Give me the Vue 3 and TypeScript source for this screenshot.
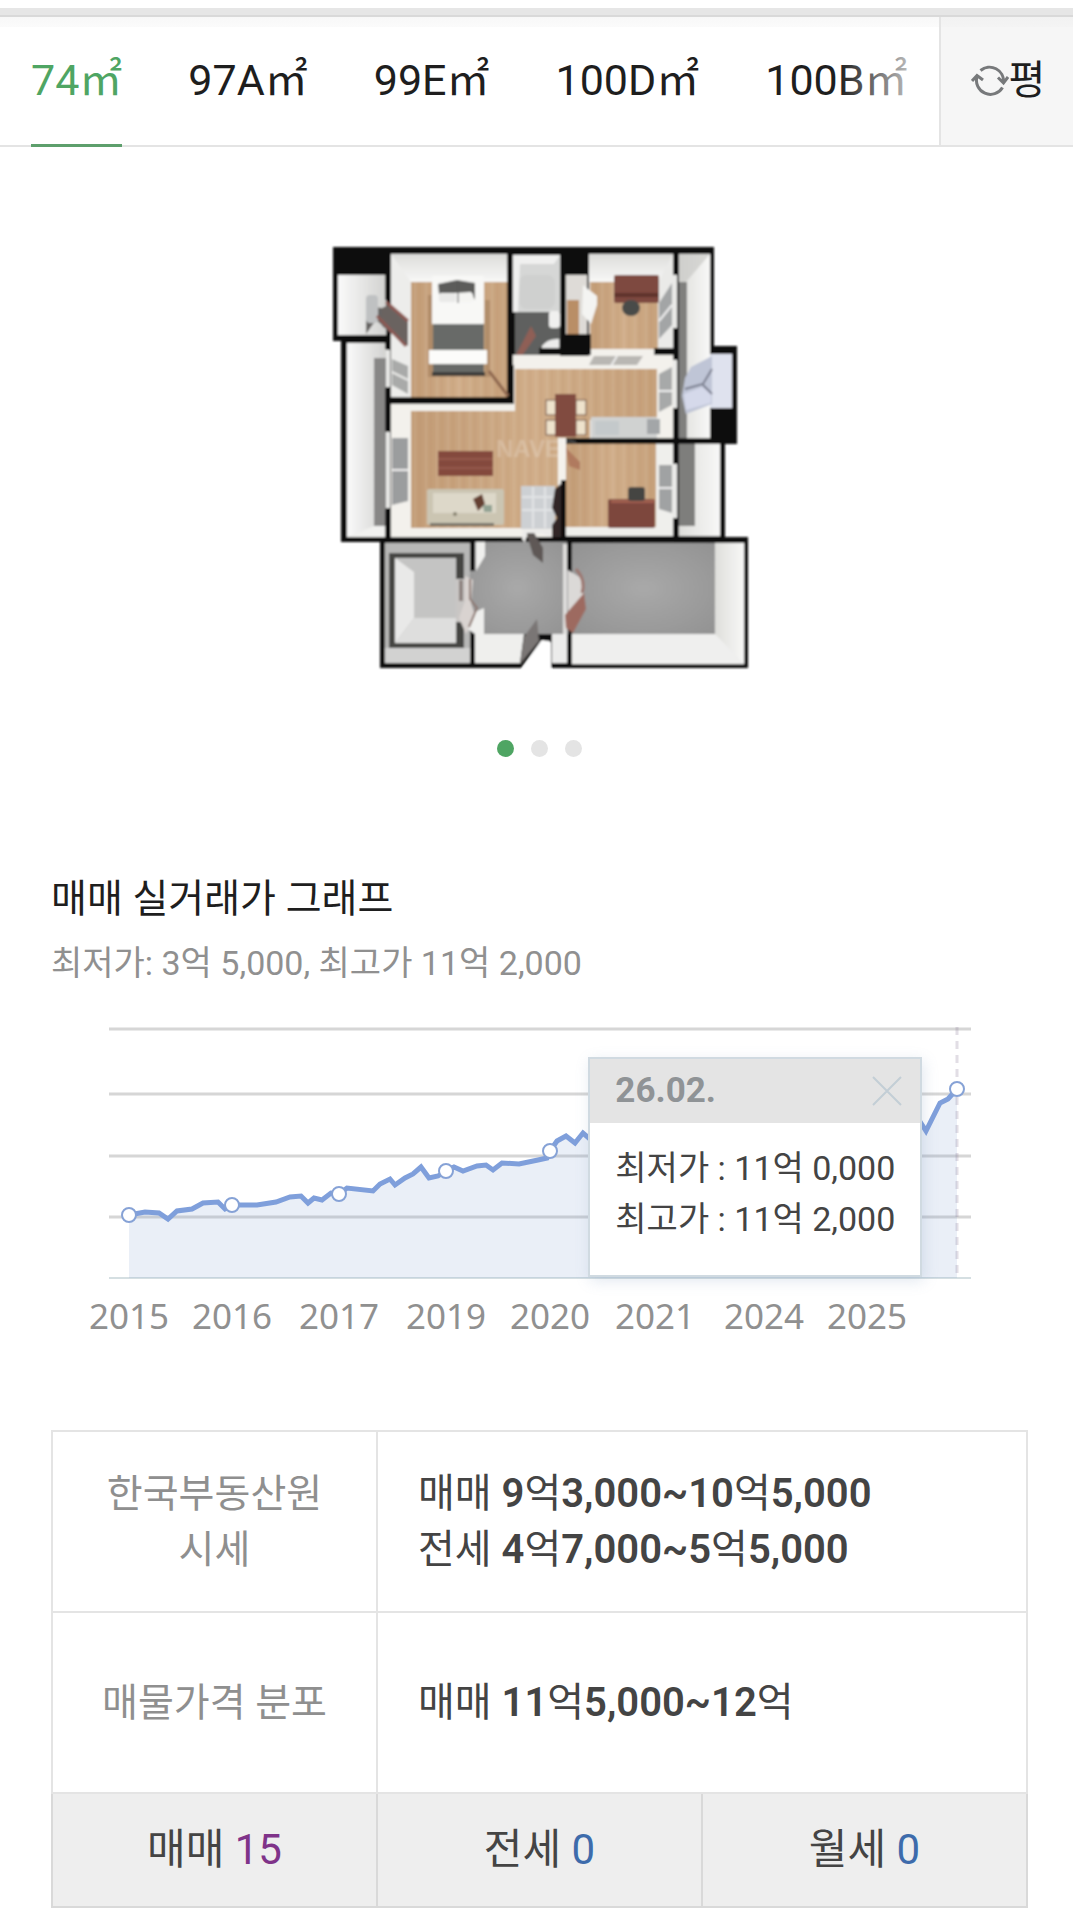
<script setup lang="ts">
import { computed, ref } from 'vue'

interface Point {
  x: number
  y: number
}

const areas = ['74㎡', '97A㎡', '99E㎡', '100D㎡', '100B㎡']
const activeArea = ref(0)
const activeSlide = ref(0)
const tooltipOpen = ref(true)

const gridLines = [19, 84, 146, 207]
const axisY = 268

const series: Point[] = [
  [78, 205], [94, 202], [108, 203], [117, 209], [126, 201], [141, 199], [152, 193], [167, 192],
  [174, 199], [181, 195], [206, 195], [225, 192], [239, 187], [250, 186], [257, 193], [263, 188],
  [271, 190], [280, 183], [288, 184], [296, 178], [322, 181], [329, 174], [339, 169], [344, 175],
  [354, 168], [362, 164], [370, 157], [378, 168], [387, 166], [395, 161], [403, 157], [412, 161],
  [426, 156], [435, 155], [442, 160], [451, 153], [468, 154], [487, 150], [496, 148], [499, 141],
  [506, 131], [515, 126], [524, 133], [532, 123], [540, 130], [560, 112], [604, 88], [650, 70],
  [713, 96], [770, 118], [816, 104], [868, 110], [875, 121], [889, 93], [897, 89], [906, 79],
].map(([x, y]) => ({ x, y }))

const linePoints = computed(() => series.map((p) => `${p.x},${p.y}`).join(' '))
const areaPoints = computed(() => `78,${axisY} ${linePoints.value} 906,${axisY}`)

const markers: Point[] = [
  { x: 78, y: 205 },
  { x: 181, y: 195 },
  { x: 288, y: 184 },
  { x: 395, y: 161 },
  { x: 499, y: 141 },
  { x: 906, y: 79 },
]

const years = [
  { x: 78, label: '2015' },
  { x: 181, label: '2016' },
  { x: 288, label: '2017' },
  { x: 395, label: '2019' },
  { x: 499, label: '2020' },
  { x: 604, label: '2021' },
  { x: 713, label: '2024' },
  { x: 816, label: '2025' },
]
</script>

<template>
  <main class="page">
    <div class="strip"></div>

    <nav class="area-bar" aria-label="면적">
      <div class="tabs">
        <button
          v-for="(area, i) in areas"
          :key="area"
          type="button"
          class="tab"
          :class="{ active: i === activeArea }"
          @click="activeArea = i"
        >
          {{ area }}
        </button>
      </div>
      <button type="button" class="unit">
        <svg class="unit-icon" width="38" height="34" viewBox="-19 -17 38 34" aria-hidden="true">
          <path d="M-9.500 -10.500A14 14 0 0 1 13.500 1.500M8 -3.500L13.500 2L18 -4" />
          <path d="M12.500 6.500A14 14 0 0 1 -13 -4.500M-18 0L-13 -5.500L-7 -1" />
        </svg>
        <span>평</span>
      </button>
    </nav>

    <section class="plan">
      <svg class="plan-image" width="440" height="460" viewBox="0 0 440 460" role="img" aria-label="평면도">
        <defs>
          <linearGradient id="wood" x1="0" x2="1" y1="0" y2="0">
            <stop offset="0" stop-color="#c29c76" />
            <stop offset="0.500" stop-color="#d0ad89" />
            <stop offset="1" stop-color="#c6a17b" />
          </linearGradient>
          <pattern id="grain" width="11" height="40" patternUnits="userSpaceOnUse">
            <rect width="2" height="40" fill="#a97b50" opacity=".1" />
            <rect x="6" width="2" height="40" fill="#fff" opacity=".08" />
          </pattern>
          <linearGradient id="wallDown" x1="0" x2="0" y1="0" y2="1">
            <stop offset="0" stop-color="#dcdcda" />
            <stop offset="1" stop-color="#f8f8f7" />
          </linearGradient>
          <linearGradient id="wallRight" x1="0" x2="1" y1="0" y2="0">
            <stop offset="0" stop-color="#fafafa" />
            <stop offset="1" stop-color="#d2d2d0" />
          </linearGradient>
          <linearGradient id="wallLeft" x1="1" x2="0" y1="0" y2="0">
            <stop offset="0" stop-color="#f8f8f7" />
            <stop offset="1" stop-color="#dededb" />
          </linearGradient>
          <radialGradient id="stone" r="0.800">
            <stop offset="0" stop-color="#a9a9a9" />
            <stop offset="1" stop-color="#8f8f8f" />
          </radialGradient>
          <filter id="soft" x="-10%" y="-10%" width="120%" height="120%">
            <feGaussianBlur stdDeviation="1" />
          </filter>
        </defs>

        <g filter="url(#soft)">
          <!-- outer walls -->
          <path
            fill="#111"
            d="M13 17H394V116H417V214H405V307H428V438H231V412L222 410L201 438H60V312H21V111H13Z"
          />

          <!-- storage and west balcony -->
          <path fill="url(#wallRight)" d="M18 45H66V105H18Z" />
          <path fill="#666462" d="M46 76L62 78L86 92V116L56 90L46 104Z" />
          <rect x="46" y="65" width="12" height="28" rx="4" fill="#bfc1c2" />
          <rect x="27" y="113" width="39" height="194" fill="url(#wallRight)" />
          <path fill="#888786" d="M54 128H66V296H54Z" />
          <path fill="#f1f1ef" d="M27 307L54 296H66V307Z" />

          <!-- main bedroom -->
          <rect x="71" y="24" width="116" height="143" fill="#ededeb" />
          <path fill="url(#wallDown)" d="M71 24H187V52H91Z" />
          <rect x="91" y="52" width="96" height="115" fill="url(#wood)" />
          <rect x="91" y="52" width="96" height="115" fill="url(#grain)" />
          <path fill="#6b6361" d="M62 78L70 74L88 92V116L62 96Z" />
          <path stroke="#8d5952" stroke-width="3" fill="none" d="M66 72L88 91M57 86L86 116" />
          <path fill="#a9aaa9" d="M72 129L88 136V164L72 155Z" />
          <path stroke="#e9e9e7" stroke-width="2" d="M72 142L88 150" />
          <path fill="#876349" opacity=".35" d="M108 65H113V145H165V70L170 70V147H108Z" />
          <rect x="112" y="46" width="52" height="49" rx="2" fill="#f8f8f6" />
          <path fill="#5c5c5a" d="M118 54L137 50L155 53V70L151 62L119 64Z" />
          <rect x="119" y="63" width="17" height="9" rx="2" fill="#e9e9e8" />
          <rect x="139" y="63" width="14" height="9" rx="2" fill="#f4f4f2" />
          <path stroke="#555" d="M138 50V73" />
          <rect x="113" y="94" width="51" height="51" fill="#686b68" />
          <rect x="109" y="120" width="58" height="14" fill="#fcfcfa" />
          <path fill="#3c3c3b" d="M112 142H165V146H112Z" />
          <path stroke="#8f684f" stroke-width="3" d="M169 141L188 166" />

          <!-- bathroom -->
          <rect x="193" y="25" width="47" height="57" fill="#d6d7d6" />
          <rect x="199" y="45" width="36" height="34" rx="8" fill="#c8c9c8" opacity=".5" />
          <path fill="#f0f0ef" d="M193 25H240L234 34H200L198 82H193Z" />
          <path fill="#5f605f" d="M195 82H240V118H219V135H195Z" />
          <rect x="229" y="81" width="11" height="17" rx="3" fill="#f0f0ef" />
          <path fill="#ececeb" d="M222 116Q228 108 239 109V118H222Z" />
          <path fill="#8f5f56" d="M196 125L211 96L216 106L194 137Z" />

          <!-- closet and study -->
          <rect x="246" y="45" width="21" height="59" fill="#dedbd7" />
          <rect x="247" y="70" width="12" height="34" fill="#b98e66" />
          <rect x="269" y="24" width="84" height="94" fill="#eaeae8" />
          <path fill="url(#wallDown)" d="M269 24H353L338 52H269Z" />
          <rect x="270" y="52" width="68" height="68" fill="url(#wood)" />
          <rect x="270" y="52" width="68" height="68" fill="url(#grain)" />
          <path fill="#f4f4f2" d="M263 55L277 66V75L271 94L262 84Z" />
          <rect x="294" y="45" width="45" height="28" rx="2" fill="#7e4a40" />
          <path fill="#5f332c" d="M294 63H339V67H294Z" />
          <ellipse cx="311" cy="78" rx="9" ry="8" fill="#4a4b49" />
          <path fill="#a3a5a6" d="M339 73L352 53V95L339 109Z" />
          <path stroke="#eee" stroke-width="2" d="M339 91L352 75" />

          <!-- east balcony and outdoor unit -->
          <rect x="359" y="24" width="31" height="184" fill="url(#wallLeft)" />
          <path fill="#c9c9c6" d="M359 24H390L366 52H359Z" opacity=".7" />
          <rect x="359" y="52" width="8" height="156" fill="#80807e" />
          <rect x="390" y="124" width="22" height="54" fill="#dfe2ee" />
          <path fill="#bfc5d6" d="M365 148L371 137L392 126V174L366 184L362 166Z" />
          <path fill="#d5d9ea" d="M364 164L382 157L391 163V173L366 180Z" />
          <path stroke="#777b8b" stroke-width="2" fill="none" d="M365 159L383 154L392 139M383 155L392 164" />

          <!-- living and dining -->
          <path fill="#f3f1ec" d="M193 125H240V126H269L271 119H334V125H353V208H246V307H71V174H194V135H193Z" />
          <path fill="url(#wood)" d="M195 139H337V190H270V208H238V298H91V181H195Z" />
          <path fill="url(#grain)" d="M195 139H337V190H270V208H238V298H91V181H195Z" />
          <path fill="#b9b7b3" d="M274 126H323L317 135H269Z" />
          <path stroke="#eee" stroke-width="2" d="M297 126L291 136" />
          <path fill="#a7a9a9" d="M339 144L352 137V175L339 182Z" />
          <path stroke="#eee" stroke-width="2" d="M339 161H352" />
          <rect x="271" y="187" width="66" height="21" fill="#d0d2d1" />
          <rect x="275" y="191" width="24" height="14" fill="#c4c9cb" />
          <rect x="327" y="189" width="13" height="15" fill="#a3a6a8" />
          <g fill="#eee2cc" stroke="#725446">
            <rect x="226" y="170" width="10" height="15" />
            <rect x="226" y="190" width="10" height="15" />
            <rect x="256" y="170" width="10" height="15" />
            <rect x="256" y="190" width="10" height="15" />
          </g>
          <rect x="235" y="164" width="21" height="43" fill="#814b40" />
          <path fill="#9b9d9e" d="M72 208H88V271L72 275Z" />
          <path stroke="#eee" stroke-width="2" d="M72 240H88" />
          <rect x="118" y="221" width="55" height="25" fill="#84493e" />
          <path stroke="#955a4d" stroke-width="2" d="M118 229H173M118 238H173" />
          <rect x="107" y="259" width="77" height="36" rx="2" fill="#cbc5b2" />
          <rect x="113" y="263" width="63" height="20" fill="#ddd8c9" />
          <path fill="#77756a" d="M110 293H174V296H110Z" />
          <path fill="#653f32" d="M153 269L162 264L165 274L158 281Z" />
          <path fill="#92a293" d="M163 275H172V282H164Z" />
          <circle cx="135" cy="284" r="2" fill="#85806d" />
          <rect x="201" y="256" width="34" height="43" fill="#cdd0d3" />
          <path stroke="#e2e4e6" stroke-width="2" fill="none" d="M202 267H233M202 280H233M213 257V298M225 257V298" />
          <path fill="#302826" d="M235 259L244 251V309H232V295L237 288L232 278Z" />
          <text x="176" y="227" class="mark">NAVER</text>

          <!-- south bedroom -->
          <rect x="246" y="214" width="107" height="92" fill="#efefec" />
          <rect x="246" y="214" width="90" height="83" fill="url(#wood)" />
          <rect x="246" y="214" width="90" height="83" fill="url(#grain)" />
          <path fill="#f5f2ec" d="M238 214H244V250H238Z" />
          <path fill="#b07a5e" d="M246 218L260 232V240L249 236Z" />
          <rect x="288" y="269" width="47" height="29" rx="2" fill="#7d473d" />
          <path fill="#a15f50" d="M291 270H334V273H291Z" />
          <rect x="308" y="257" width="17" height="14" rx="3" fill="#444543" />
          <path fill="#a0a2a3" d="M339 235H352V283L339 279Z" />
          <path stroke="#eee" stroke-width="2" d="M339 258H352" />
          <rect x="359" y="214" width="41" height="92" fill="url(#wallLeft)" />
          <rect x="359" y="214" width="16" height="82" fill="#7e7e7b" />

          <!-- window frames in the bearing walls -->
          <path stroke="#e9e9e7" stroke-width="4" d="M68 120V157M68 202V278M355 45V98M355 130V178M355 234V288" />
          <path
            fill="#111"
            d="M65 17H70V70H65ZM65 105H70V119H65ZM65 158H70V201H65ZM65 279H70V309H65ZM69 167H192V174H69ZM187 20H193V134H187ZM240 22H269V44H240ZM240 22H246V119H240ZM240 104H271V125H240ZM220 118H244V125H220ZM334 118H358V125H334ZM353 20H358V44H353ZM353 99H358V130H353ZM353 179H358V234H353ZM353 289H358V310H353ZM260 208H412V214H260ZM390 178H417V213H390ZM241 250H246V310H241Z"
          />

          <!-- elevator -->
          <rect x="65" y="313" width="85" height="120" fill="#b7b7b6" />
          <rect x="65" y="418" width="85" height="15" fill="#d2d2d1" />
          <rect x="69" y="323" width="75" height="95" fill="#444442" />
          <rect x="75" y="328" width="61" height="85" fill="#c4c4c3" />
          <path fill="#e9e9e8" d="M75 328L94 342V388L75 413Z" />
          <path fill="#dededd" d="M75 413L94 388H136V413Z" />
          <rect x="136" y="349" width="9" height="43" fill="#c9c6c4" />
          <rect x="139" y="350" width="4" height="21" fill="#8d8380" />

          <!-- hall -->
          <path fill="url(#stone)" d="M155 312H248V404H155L147 375L150 342Z" />
          <path fill="#efefed" d="M156 312H165V326L156 341ZM155 433V404L146 398L155 382L164 378V404H204L200 433Z" />
          <path fill="#d9d3d0" d="M145 346L153 350L151 373L155 385L146 404L139 388L145 371Z" />
          <path stroke="#8d7770" stroke-width="2" fill="none" d="M150 349V369L157 378L149 397" />
          <path fill="#5e5957" d="M206 302L213 301L223 318V333L213 325Z" />
          <path fill="#ecebea" d="M203 300H231V307L222 303H207L205 313L202 309Z" />
          <path fill="#7a7674" d="M200 434L204 407L217 389L219 411Z" />
          <path fill="#fff" d="M203 440L221 411H229L231 440Z" />
          <path fill="#ececeb" d="M232 404H248V433H232Z" />
          <path stroke="#dedddb" stroke-width="4" d="M245 314V404" />

          <!-- south east room -->
          <rect x="252" y="313" width="172" height="121" fill="#efefee" />
          <rect x="252" y="313" width="143" height="91" fill="url(#stone)" />
          <path fill="url(#wallLeft)" d="M395 313H424V434L395 404Z" />
          <path fill="#dbd9d7" d="M248 340L261 348L264 366L248 382Z" />
          <path fill="#9d6b61" d="M245 385L264 363L266 379L253 403L246 398Z" />
          <path stroke="#9d7770" stroke-width="3" fill="none" d="M256 339Q266 350 262 363" />
          <path fill="#111" d="M150 308H155V341H150ZM150 404H155V438H150ZM247 308H252V340H247ZM247 404H252V438H247ZM21 307H202V312H21ZM232 307H428V312H232Z" />
        </g>
      </svg>

      <div class="dots">
        <button
          v-for="n in 3"
          :key="n"
          type="button"
          class="dot"
          :class="{ on: n - 1 === activeSlide }"
          :aria-label="`${n}번째 이미지`"
          @click="activeSlide = n - 1"
        ></button>
      </div>
    </section>

    <section class="trend">
      <h2>매매 실거래가 그래프</h2>
      <p class="range">최저가: 3억 5,000, 최고가 11억 2,000</p>

      <div class="chart">
        <svg class="chart-svg" viewBox="0 0 977 340" role="img" aria-label="매매 실거래가">
          <line v-for="y in gridLines" :key="y" class="grid" x1="58" x2="920" :y1="y" :y2="y" />
          <line class="axis" x1="58" x2="920" :y1="axisY" :y2="axisY" />
          <polygon class="fill" :points="areaPoints" />
          <line class="cursor" x1="906" x2="906" y1="17" :y2="axisY" />
          <polyline class="line" :points="linePoints" />
          <circle v-for="m in markers" :key="m.x" class="marker" :cx="m.x" :cy="m.y" r="7" />
          <text v-for="t in years" :key="t.x" class="year" :x="t.x" y="319">{{ t.label }}</text>
        </svg>

        <div v-if="tooltipOpen" class="tooltip">
          <div class="tooltip-head">
            <strong>26.02.</strong>
            <button type="button" class="close" aria-label="닫기" @click="tooltipOpen = false">
              <svg width="30" height="30" viewBox="0 0 30 30" aria-hidden="true">
                <path d="M1 1L29 29M29 1L1 29" />
              </svg>
            </button>
          </div>
          <div class="tooltip-body">
            <div>최저가 : 11억 0,000</div>
            <div>최고가 : 11억 2,000</div>
          </div>
        </div>
      </div>
    </section>

    <table class="prices">
      <tbody>
        <tr>
          <th scope="row">한국부동산원<br />시세</th>
          <td colspan="2">
            <div>매매 <b>9<i>억</i>3,000~10<i>억</i>5,000</b></div>
            <div>전세 <b>4<i>억</i>7,000~5<i>억</i>5,000</b></div>
          </td>
        </tr>
        <tr>
          <th scope="row">매물가격 분포</th>
          <td colspan="2">
            <div>매매 <b>11<i>억</i>5,000~12<i>억</i></b></div>
          </td>
        </tr>
        <tr class="counts">
          <td><a href="#sale">매매 <span class="visited">15</span></a></td>
          <td><a href="#lease">전세 <span>0</span></a></td>
          <td><a href="#rent">월세 <span>0</span></a></td>
        </tr>
      </tbody>
    </table>
  </main>
</template>

<style>
body {
  margin: 0;
  background: #fff;
}
</style>

<style scoped>
.page {
  font-family: Roboto, 'Noto Sans CJK KR', sans-serif;
  color: #1e1e1e;
  background: #fff;
  overflow: hidden;
}

button {
  margin: 0;
  padding: 0;
  border: 0;
  background: none;
  font: inherit;
  color: inherit;
  cursor: pointer;
}

.strip {
  height: 7px;
  margin-top: 8px;
  background: #e6e6e6;
  border-bottom: 2px solid #d9d9d9;
}

.area-bar {
  display: flex;
  height: 128px;
  border-bottom: 2px solid #e4e4e4;
  background: linear-gradient(#f8f8f8, #fbfbfb 10px, #fff 10px);
}

.tabs {
  position: relative;
  flex: 1;
  min-width: 0;
  display: flex;
  gap: 66px;
  padding-left: 31px;
  margin-bottom: -2px;
  overflow: hidden;
}

.tabs::after {
  content: '';
  position: absolute;
  top: 12px;
  right: 0;
  bottom: 4px;
  width: 100px;
  background: linear-gradient(90deg, transparent, #fff);
  pointer-events: none;
}

.tab {
  flex: none;
  box-sizing: border-box;
  padding-bottom: 1px;
  border-bottom: 3px solid transparent;
  font-size: 43px;
  line-height: 64px;
}

.tab.active {
  color: #4fa563;
  border-bottom-color: #5d9f6c;
}

.unit {
  flex: none;
  box-sizing: border-box;
  width: 134px;
  padding: 0 0 0 2px;
  display: flex;
  align-items: center;
  justify-content: center;
  border-left: 2px solid #e4e4e4;
  background: linear-gradient(#f2f2f2, #f4f4f4 10px, #f6f6f6 10px);
  font-size: 40px;
  line-height: 56px;
}

.unit-icon {
  fill: none;
  stroke: #77797b;
  stroke-width: 3;
}

.plan {
  display: flex;
  flex-direction: column;
  align-items: center;
  padding: 83px 45px 0 51px;
}

.plan-image {
  display: block;
}

.mark {
  font: bold 24px 'Liberation Sans', sans-serif;
  fill: #fff;
  opacity: 0.2;
}

.dots {
  display: flex;
  gap: 17px;
  margin-top: 50px;
}

.dot {
  width: 17px;
  height: 17px;
  border-radius: 50%;
  background: #e4e4e4;
}

.dot.on {
  background: #4fa563;
}

.trend {
  padding: 114px 45px 0 51px;
}

h2 {
  margin: 0;
  font-size: 39px;
  line-height: 56px;
  font-weight: 400;
}

.range {
  margin: 12px 0 0;
  font-size: 34px;
  line-height: 48px;
  color: #909090;
}

.chart {
  position: relative;
  margin-top: 23px;
}

.chart-svg {
  display: block;
  width: 100%;
}

.grid {
  stroke: #d6d6d6;
  stroke-width: 3;
}

.axis {
  stroke: #d5dfe2;
  stroke-width: 2;
}

.fill {
  fill: #7a9ccb;
  fill-opacity: 0.16;
}

.cursor {
  stroke: #8a7a98;
  stroke-opacity: 0.25;
  stroke-width: 3;
  stroke-dasharray: 8 6;
}

.line {
  fill: none;
  stroke: #7f9fdb;
  stroke-width: 5;
}

.marker {
  fill: #fff;
  stroke: #86a2d6;
  stroke-width: 2;
}

.year {
  font-family: 'Noto Sans', sans-serif;
  font-size: 35px;
  fill: #909090;
  text-anchor: middle;
}

.tooltip {
  position: absolute;
  top: 47px;
  left: 55%;
  box-sizing: border-box;
  width: 334px;
  height: 220px;
  border: 2px solid #d0dae1;
  background: #fff;
  box-shadow: 2px 4px 14px rgba(110, 140, 180, 0.2);
}

.tooltip-head {
  display: flex;
  align-items: center;
  justify-content: space-between;
  height: 64px;
  padding: 0 18px 0 25px;
  background: #e4e4e4;
  color: #8f9396;
  font-size: 35px;
  line-height: 48px;
}

.close {
  width: 30px;
  height: 34px;
}

.close svg {
  display: block;
  fill: none;
  stroke: #c3ced6;
  stroke-width: 2;
}

.tooltip-body {
  padding: 20px 0 0 25px;
  font-size: 34px;
  line-height: 51px;
  color: #444;
  white-space: nowrap;
}

.prices {
  width: calc(100% - 96px);
  margin: 80px 45px 0 51px;
  border-collapse: collapse;
  table-layout: fixed;
  color: #444;
}

.prices th,
.prices td {
  box-sizing: border-box;
  height: 181px;
  padding: 0;
  border: 2px solid #e4e4e4;
}

.prices th {
  font-size: 39px;
  line-height: 56px;
  font-weight: 400;
  color: #8f8f8f;
}

.prices td {
  padding-left: 40px;
  font-size: 40px;
  line-height: 56px;
}

.prices b {
  font-weight: 600;
}

.prices i {
  font-style: normal;
  font-weight: 400;
}

.prices .counts td {
  height: 114px;
  padding: 0;
  border-color: #d9d9d9;
  background: #eee;
  text-align: center;
  font-size: 42px;
}

.counts a {
  display: block;
  color: #444;
  text-decoration: none;
}

.counts span {
  color: #3d6bab;
}

.counts .visited {
  color: #7f3389;
}
</style>
